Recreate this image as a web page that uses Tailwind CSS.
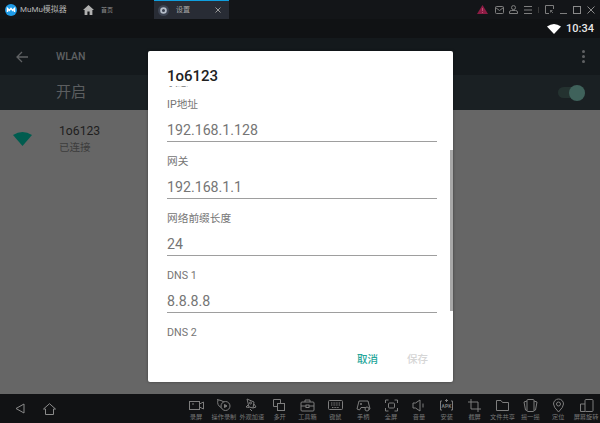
<!DOCTYPE html>
<html lang="zh-CN">
<head>
<meta charset="UTF-8">
<title>MuMu模拟器</title>
<script src="https://cdn.jsdelivr.net/npm/@tailwindcss/browser@4"></script>
</head>
<body class="relative w-[600px] h-[423px] overflow-hidden bg-[#111315] font-['Roboto','Noto_Sans_CJK_SC',sans-serif]">
  <div class="flex flex-col h-full">
    <!-- title bar -->
    <div class="flex h-[19px] items-center bg-[#131518] text-[#8f8f8f]">
      <div class="flex items-center pl-[5px] w-[78px]">
        <svg class="w-[12px] h-[12px]" viewBox="0 0 12 12"><circle cx="6" cy="6" r="6" fill="#1e9be8"/><path d="M2.5 8V4.6L4.4 6.4 6 4.4 7.6 6.4 9.5 4.6V8" fill="none" stroke="#fff" stroke-width="1.5"/></svg>
        <span class="ml-[3px] text-[8px] text-[#b4b4b4] whitespace-nowrap">MuMu模拟器</span>
      </div>
      <svg class="ml-[5px] w-[11px] h-[10px]" viewBox="0 0 11 10"><path d="M5.5 0 11 5H9.4V10H6.6V6.6H4.4V10H1.6V5H0Z" fill="#b0b0b0"/></svg>
      <span class="ml-[7px] text-[6px] w-[53px]">首页</span>
      <div class="flex items-center w-[75px] h-[19px] bg-[#282c35] border-t border-[#0f9fe0] pl-[4px]">
        <svg class="w-[11px] h-[11px]" viewBox="0 0 10 10"><circle cx="5" cy="5" r="5" fill="#3d4452"/><circle cx="5" cy="5" r="2.2" fill="none" stroke="#b5bdc9" stroke-width="1.6"/></svg>
        <span class="ml-[7px] text-[7px] text-[#a8a8a8] w-[39px]">设置</span>
        <svg class="w-[6px] h-[6px]" viewBox="0 0 6 6"><path d="M.5.5 5.5 5.500M5.500.5.500 5.500" stroke="#9a9a9a" fill="none"/></svg>
      </div>
      <div class="ml-auto flex items-center pr-[5px]">
        <svg class="w-[11px] h-[9px]" viewBox="0 0 11 9"><path d="M5.500 0 11 9H0Z" fill="#8c1c44"/><path d="M5.500 3V6M5.500 7V8" stroke="#d3668b" stroke-width=".7"/></svg>
        <svg class="ml-[7px] w-[9px] h-[8px]" viewBox="0 0 9 8"><rect x=".5" y=".5" width="8" height="7" rx="1" fill="none" stroke="#7e7e7e"/><path d="M.5 1.500 4.500 4.500 8.500 1.500" fill="none" stroke="#7e7e7e"/></svg>
        <svg class="ml-[5px] w-[9px] h-[9px]" viewBox="0 0 9 9"><circle cx="4.500" cy="2.600" r="2" fill="none" stroke="#7e7e7e"/><path d="M.5 8.500V7Q.5 5.500 2.500 5.500H6.500Q8.500 5.500 8.500 7V8.500Z" fill="none" stroke="#7e7e7e"/></svg>
        <svg class="ml-[6px] w-[8px] h-[8px]" viewBox="0 0 8 8"><path d="M0 .5H8M0 4H8M0 7.500H8" stroke="#7e7e7e"/></svg>
        <span class="ml-[6px] w-px h-[6px] bg-[#3a3a3a]"></span>
        <svg class="ml-[6px] w-[9px] h-[9px]" viewBox="0 0 9 9"><path d="M4 8.500H.5V.5H8.500V4" fill="none" stroke="#7e7e7e"/><path d="M5.500 5.500 8 8M5.500 5.500V7.500M5.500 5.500H7.500" fill="none" stroke="#7e7e7e" stroke-width=".8"/></svg>
        <svg class="ml-[6px] w-[7px] h-[8px]" viewBox="0 0 7 8"><path d="M0 7.500H7" stroke="#7e7e7e"/></svg>
        <svg class="ml-[6px] w-[8px] h-[8px]" viewBox="0 0 8 8"><rect x=".5" y=".5" width="7" height="7" fill="none" stroke="#8a8a8a"/></svg>
        <svg class="ml-[6px] w-[8px] h-[8px]" viewBox="0 0 8 8"><path d="M.5.5 7.500 7.500M7.500.5.500 7.500" stroke="#8a8a8a" fill="none"/></svg>
      </div>
    </div>
    <!-- android status bar -->
    <div class="flex h-[19px] items-center justify-end bg-[#101214] pr-[6px]">
      <svg class="w-[14px] h-[10px]" viewBox="0 0 14 10"><path d="M0 2.500Q7-2.500 14 2.500L7 10Z" fill="#fff"/></svg>
      <span class="ml-[5px] mt-[2px] text-[11px] font-medium text-[#e8e8e8]">10:34</span>
    </div>
    <!-- toolbar -->
    <div class="flex h-[37px] items-center bg-[#14191c] text-[#5f6163]">
      <svg class="ml-[16px] w-[12px] h-[12px]" viewBox="0 0 12 12"><path d="M12 6H1M6 1 1 6 6 11" fill="none" stroke="#5f6163" stroke-width="1.300"/></svg>
      <span class="ml-[28px] text-[10.500px] font-medium">WLAN</span>
      <span class="ml-auto mr-[15px] flex flex-col gap-[2px]">
        <i class="block w-[3px] h-[3px] rounded-full bg-[#5f6163]"></i>
        <i class="block w-[3px] h-[3px] rounded-full bg-[#5f6163]"></i>
        <i class="block w-[3px] h-[3px] rounded-full bg-[#5f6163]"></i>
      </span>
    </div>
    <!-- on/off row -->
    <div class="flex h-[35px] items-center bg-[#1a2023]">
      <span class="ml-[56px] text-[15px] text-[#5c5e60]">开启</span>
      <span class="relative ml-auto mr-[15px] block w-[27px] h-[11px] rounded-full bg-[#243230]">
        <i class="absolute right-0 -top-[2px] block w-[16px] h-[16px] rounded-full bg-[#3f625b]"></i>
      </span>
    </div>
    <!-- network list -->
    <div class="flex-1 bg-[#666666]">
      <div class="flex items-start pt-[14px]">
        <svg class="ml-[13px] mt-[7px] w-[19px] h-[15px]" viewBox="0 0 19 15"><path d="M0 4Q9.500-2 19 4L9.500 15Z" fill="#005c4f"/></svg>
        <div class="ml-[27px]">
          <div class="text-[12.200px] leading-[15px] text-[#1e1e1e]">1o6123</div>
          <div class="text-[10.500px] leading-[18px] text-[#3d3d3d]">已连接</div>
        </div>
      </div>
    </div>
    <!-- bottom bar -->
    <div class="flex h-[29px] items-center bg-[#111214] text-[#777777]">
      <svg class="ml-[15px] w-[10px] h-[11px]" viewBox="0 0 10 11"><path d="M9 1V10L1 5.500Z" fill="none" stroke="#8a8a8a"/></svg>
      <svg class="ml-[18px] w-[13px] h-[12px]" viewBox="0 0 13 12"><path d="M.5 6 6.500 .7 12.500 6H10.500V11.500H2.500V6Z" fill="none" stroke="#8a8a8a"/></svg>
      <div class="ml-auto self-stretch pt-[4px] grid grid-cols-[repeat(15,27.860px)] text-center text-[6.200px] leading-[8px] whitespace-nowrap">
        <div class="flex flex-col items-center"><svg class="w-[15px] h-[15px]" viewBox="0 0 15 15" fill="none" stroke="#7d7d7d"><rect x=".5" y="3.500" width="10" height="8"/><path d="M10.500 6 14.500 4V11L10.500 9M3 6H5"/></svg><span>录屏</span></div>
        <div class="flex flex-col items-center"><svg class="w-[15px] h-[15px]" viewBox="0 0 15 15" fill="none" stroke="#7d7d7d"><path d="M1 1.500 5 2.500 8 4M2 2Q.5 7 5 9.500"/><circle cx="9.500" cy="8" r="4.500"/><path d="M8.500 6.500 11 8 8.500 9.500Z" fill="#7d7d7d"/></svg><span>操作录制</span></div>
        <div class="flex flex-col items-center"><svg class="w-[15px] h-[15px]" viewBox="0 0 15 15" fill="none" stroke="#7d7d7d"><path d="M3 1 10 4 9 10 5 9Z"/><circle cx="6.500" cy="5" r="1"/><path d="M4 7 2 9 5 9.500M10 6 12 9 9 10M6 11 8 13"/></svg><span>外观加速</span></div>
        <div class="flex flex-col items-center"><svg class="w-[15px] h-[15px]" viewBox="0 0 15 15" fill="none" stroke="#7d7d7d"><path d="M8.500 5.500V1.500H1.500V8.500H5.500"/><rect x="5.500" y="5.500" width="7" height="7"/></svg><span>多开</span></div>
        <div class="flex flex-col items-center"><svg class="w-[15px] h-[15px]" viewBox="0 0 15 15" fill="none" stroke="#7d7d7d"><rect x="1" y="4" width="13" height="9" rx="1"/><path d="M5 4V2H10V4M1 8H14"/><rect x="6" y="7" width="3" height="2.500" fill="#111214"/></svg><span>工具箱</span></div>
        <div class="flex flex-col items-center"><svg class="w-[15px] h-[15px]" viewBox="0 0 15 15" fill="none" stroke="#7d7d7d"><rect x=".5" y="2.500" width="14" height="9" rx="1"/><path d="M3 5H12M3 7H12M4 9.500H11" stroke-dasharray="1 .6"/></svg><span>键鼠</span></div>
        <div class="flex flex-col items-center"><svg class="w-[15px] h-[15px]" viewBox="0 0 15 15" fill="none" stroke="#7d7d7d"><path d="M3 3H12L14 11 11.500 12 10 9.500H5L3.500 12 1 11Z"/><path d="M4 6H6M5 5V7"/><circle cx="11" cy="11" r="2" fill="#111214"/></svg><span>手柄</span></div>
        <div class="flex flex-col items-center"><svg class="w-[15px] h-[15px]" viewBox="0 0 15 15" fill="none" stroke="#7d7d7d"><path d="M1.500 5V2H4.500M10.500 2H13.500V5M13.500 10V13H10.500M4.500 13H1.500V10"/><rect x="4.500" y="5" width="6" height="5" rx="1"/></svg><span>全屏</span></div>
        <div class="flex flex-col items-center"><svg class="w-[15px] h-[15px]" viewBox="0 0 15 15" fill="none" stroke="#7d7d7d"><path d="M2 5H4.500L9 2V13L4.500 10H2ZM12 5.500V9.500"/></svg><span>音量</span></div>
        <div class="flex flex-col items-center"><svg class="w-[15px] h-[15px]" viewBox="0 0 15 15" fill="none" stroke="#7d7d7d"><path d="M3 3H1.500V12H3M12 3H13.500V12H12M7.500 1V4M6 2.500H9"/><text x="7.500" y="10" text-anchor="middle" font-size="5" font-weight="700" fill="#7d7d7d" stroke="none">APK</text></svg><span>安装</span></div>
        <div class="flex flex-col items-center"><svg class="w-[15px] h-[15px]" viewBox="0 0 15 15" fill="none" stroke="#7d7d7d"><path d="M4 1V11H14M1 4H11V14"/></svg><span>截屏</span></div>
        <div class="flex flex-col items-center"><svg class="w-[15px] h-[15px]" viewBox="0 0 15 15" fill="none" stroke="#7d7d7d"><path d="M1.500 2.500H6L7.500 4.500H13.500V12.500H1.500Z"/></svg><span>文件共享</span></div>
        <div class="flex flex-col items-center"><svg class="w-[15px] h-[15px]" viewBox="0 0 15 15" fill="none" stroke="#7d7d7d"><rect x="4" y="1.500" width="7" height="12" rx="1"/><path d="M4 3 1 4 2.500 12 4 12.500M11 3 14 4 12.500 12 11 12.500"/></svg><span>摇一摇</span></div>
        <div class="flex flex-col items-center"><svg class="w-[15px] h-[15px]" viewBox="0 0 15 15" fill="none" stroke="#7d7d7d"><path d="M7.500 14Q2.500 9 2.500 6A5 5 0 0 1 12.500 6Q12.500 9 7.500 14Z"/><circle cx="7.500" cy="6" r="2"/></svg><span>定位</span></div>
        <div class="flex flex-col items-center"><svg class="w-[15px] h-[15px]" viewBox="0 0 15 15" fill="none" stroke="#7d7d7d"><rect x="6" y="1.500" width="8" height="12" rx="1"/><path d="M6 6H1.500V13.500H6"/></svg><span>屏幕旋转</span></div>
      </div>
    </div>
  </div>

  <!-- dialog -->
  <div class="absolute left-[148px] top-[51px] w-[305px] h-[331px] rounded-[2px] bg-white flex flex-col shadow-[0_0_3px_rgba(0,0,0,0.4)]">
    <div class="pl-[19px] pt-[15px] h-[35px] text-[15px] leading-[20px] font-medium text-[#212121]">1o6123</div>
    <div class="relative h-[256px] overflow-hidden pl-[19px] pr-[16px]">
      <div class="-mt-[11px]">
        <div class="h-[15px] text-[10.700px] leading-[15px] text-[#757575] mb-[7px]">状态</div>
        <div class="h-[57px]">
          <div class="text-[10.700px] leading-[15px] text-[#757575]">IP地址</div>
          <div class="mt-[8px] text-[14.200px] leading-[20px] text-[#757575] border-b border-[#9e9e9e] h-[22px]">192.168.1.128</div>
        </div>
        <div class="h-[57px]">
          <div class="text-[10.700px] leading-[15px] text-[#757575]">网关</div>
          <div class="mt-[8px] text-[14.200px] leading-[20px] text-[#757575] border-b border-[#9e9e9e] h-[22px]">192.168.1.1</div>
        </div>
        <div class="h-[57px]">
          <div class="text-[10.700px] leading-[15px] text-[#757575]">网络前缀长度</div>
          <div class="mt-[8px] text-[14.200px] leading-[20px] text-[#757575] border-b border-[#9e9e9e] h-[22px]">24</div>
        </div>
        <div class="h-[57px]">
          <div class="text-[10.700px] leading-[15px] text-[#757575]">DNS 1</div>
          <div class="mt-[8px] text-[14.200px] leading-[20px] text-[#757575] border-b border-[#9e9e9e] h-[22px]">8.8.8.8</div>
        </div>
        <div class="text-[10.700px] leading-[15px] text-[#757575]">DNS 2</div>
      </div>
      <span class="absolute right-0 top-[64px] w-[3px] h-[161px] bg-[#a8a8a8]"></span>
    </div>
    <div class="flex justify-end gap-[29px] pr-[25px] pt-[10px] text-[10.500px] leading-[15px] font-medium">
      <span class="text-[#26a69a]">取消</span>
      <span class="text-[#d6d6d6]">保存</span>
    </div>
  </div>
</body>
</html>
